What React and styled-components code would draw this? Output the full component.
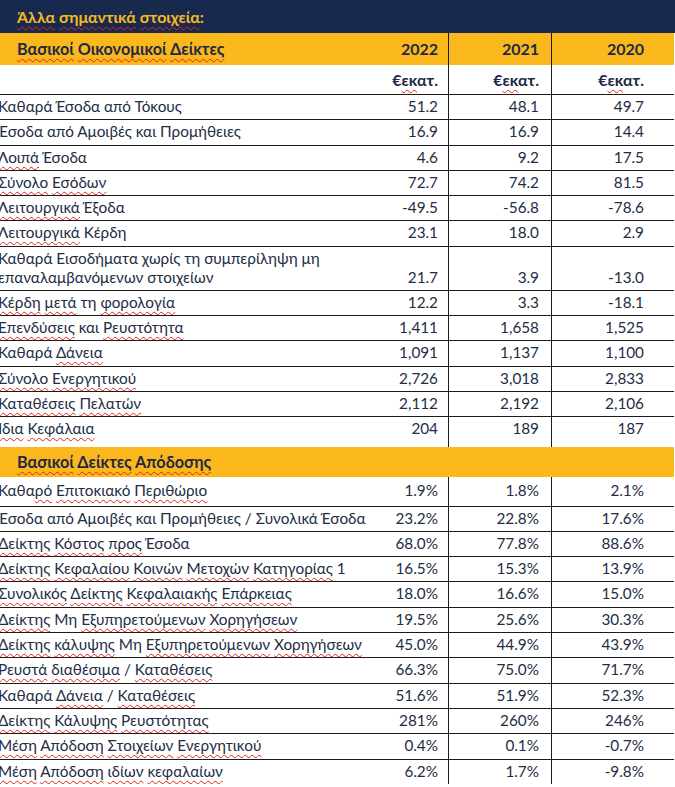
import styled, { createGlobalStyle } from 'styled-components';

const GlobalStyle = createGlobalStyle`
  body {
    margin: 0;
    background: #ffffff;
    font-family: Lato, "Noto Sans", "Liberation Sans", sans-serif;
  }
`;

const Page = styled.div`
  width: 675px;
  height: 787px;
  overflow: hidden;
  background: #ffffff;
  color: #222d44;
`;

const TitleBar = styled.div`
  height: 33px;
  background: #172a4e;
  color: #f7b823;
  display: flex;
  align-items: center;
  padding-left: 17px;
  font-size: 16px;
  font-weight: 700;
`;

const Row = styled.div`
  display: grid;
  grid-template-columns: 358px 90px 103px 123px;
  width: 674px;
  box-sizing: border-box;
  height: ${p => p.$h}px;
  border-top: ${p => (p.$line ? '1px solid #1b1b1b' : 'none')};
  background: ${p => (p.$gold ? '#fbb81c' : '#ffffff')};
  font-size: 15.3px;
  line-height: 19px;
`;

const Label = styled.div`
  padding-top: ${p => p.$pt ?? 2}px;
  margin-left: -2px;
  white-space: ${p => (p.$wrap ? 'normal' : 'nowrap')};
  font-weight: ${p => (p.$bold ? 700 : 400)};
  font-size: ${p => (p.$bold ? '16.2px' : 'inherit')};
  padding-left: ${p => (p.$indent ? 19 : 0)}px;
  color: ${p => (p.$bold ? '#1d2946' : 'inherit')};
`;

const Value = styled.div`
  text-align: right;
  padding-top: ${p => p.$pt ?? 2}px;
  padding-right: ${p => p.$pr}px;
  border-left: ${p => (p.$divider ? '1px solid #1b1b1b' : 'none')};
  font-weight: ${p => (p.$bold ? 700 : 400)};
  font-size: ${p => (p.$bold ? '16px' : 'inherit')};
  color: ${p => (p.$bold ? '#1d2946' : 'inherit')};
`;

const Squiggle = styled.span`
  text-decoration: underline wavy #e2231a;
  text-decoration-thickness: 1px;
  text-underline-offset: 3px;
  text-decoration-skip-ink: none;
`;

const pads = [10, 12, 30];

function marked(s) {
  return s.split(/(\{[^}]+\})/).map((p, i) =>
    p.startsWith('{') ? <Squiggle key={i}>{p.slice(1, -1)}</Squiggle> : p
  );
}

const financials = [
  ['Καθαρά Έσοδα από Τόκους', '51.2', '48.1', '49.7'],
  ['Έσοδα από Αμοιβές και Προμήθειες', '16.9', '16.9', '14.4'],
  ['{Λοιπά} Έσοδα', '4.6', '9.2', '17.5'],
  ['{Σύνολο} {Εσόδων}', '72.7', '74.2', '81.5'],
  ['{Λειτουργικά} Έξοδα', '-49.5', '-56.8', '-78.6'],
  ['{Λειτουργικά} Κέρδη', '23.1', '18.0', '2.9'],
  ['Καθαρά Εισοδήματα χωρίς τη συμπερίληψη μη επαναλαμβανόμενων στοιχείων', '21.7', '3.9', '-13.0', 'two'],
  ['{Κέρδη} {μετά} τη {φορολογία}', '12.2', '3.3', '-18.1'],
  ['{Επενδύσεις} και {Ρευστότητα}', '1,411', '1,658', '1,525'],
  ['Καθαρά {Δάνεια}', '1,091', '1,137', '1,100'],
  ['{Σύνολο} {Ενεργητικού}', '2,726', '3,018', '2,833'],
  ['{Καταθέσεις} {Πελατών}', '2,112', '2,192', '2,106'],
  ['{Ίδια} {Κεφάλαια}', '204', '189', '187', 'last'],
];

const ratios = [
  ['Καθα{ρό} {Επιτοκιακό} {Περιθώριο}', '1.9%', '1.8%', '2.1%', 'first'],
  ['Έσοδα από Αμοιβές και Προμήθειες / Συνολικά Έσοδα', '23.2%', '22.8%', '17.6%'],
  ['{Δείκτης} {Κόστος} {προς} Έσοδα', '68.0%', '77.8%', '88.6%'],
  ['{Δείκτης} {Κεφαλαίου} {Κοινών} {Μετοχών} {Κατηγορίας} 1', '16.5%', '15.3%', '13.9%'],
  ['{Συνολικός} {Δείκτης} {Κεφαλαιακής} {Επάρκειας}', '18.0%', '16.6%', '15.0%'],
  ['{Δείκτης} Μη {Εξυπηρετούμενων} {Χορηγήσεων}', '19.5%', '25.6%', '30.3%'],
  ['{Δείκτης} {κάλυψης} Μη {Εξυπηρετούμενων} {Χορηγήσεων}', '45.0%', '44.9%', '43.9%'],
  ['{Ρευστά} {διαθέσιμα} / {Καταθέσεις}', '66.3%', '75.0%', '71.7%'],
  ['Καθαρά {Δάνεια} / {Καταθέσεις}', '51.6%', '51.9%', '52.3%'],
  ['{Δείκτης} {Κάλυψης} {Ρευστότητας}', '281%', '260%', '246%'],
  ['{Μέση} {Απόδοση} {Στοιχείων} {Ενεργητικού}', '0.4%', '0.1%', '-0.7%'],
  ['{Μέση} {Απόδοση} {ιδίων} {κεφαλαίων}', '6.2%', '1.7%', '-9.8%'],
];

function DataRow({ row }) {
  const [label, a, b, c, kind] = row;
  const two = kind === 'two';
  const first = kind === 'first';
  const h = two ? 44 : kind === 'last' ? 31 : first ? 28.3 : 25.3;
  const pt = first ? 4 : 2;
  return (
    <Row $h={h} $line={!first}>
      <Label $wrap={two} $pt={pt}>{marked(label)}</Label>
      {[a, b, c].map((v, i) => (
        <Value key={i} $pr={pads[i]} $divider={i > 0} $pt={two ? 21 : pt}>
          {v}
        </Value>
      ))}
    </Row>
  );
}

export default function App() {
  return (
    <Page>
      <GlobalStyle />
      <TitleBar>
        <span>{marked('{Άλλα} {σημαντικά} {στοιχεία}:')}</span>
      </TitleBar>

      <Row $h={32} $gold>
        <Label $bold $indent $pt={6}>{marked('{Βασικοί} {Οικονομικοί} {Δείκτες}')}</Label>
        {['2022', '2021', '2020'].map((y, i) => (
          <Value key={y} $bold $pr={pads[i]} $divider={i > 0} $pt={6}>{y}</Value>
        ))}
      </Row>
      <Row $h={29}>
        <Label />
        {pads.map((p, i) => (
          <Value key={i} $bold $pr={p} $divider={i > 0} $pt={5}>€{marked('{εκ}')}ατ.</Value>
        ))}
      </Row>
      {financials.map(r => <DataRow key={r[0]} row={r} />)}

      <Row $h={30} $gold>
        <Label $bold $indent $pt={5}>{marked('{Βασικοί} {Δείκτες} {Απόδοσης}')}</Label>
      </Row>
      {ratios.map(r => <DataRow key={r[0]} row={r} />)}
    </Page>
  );
}
